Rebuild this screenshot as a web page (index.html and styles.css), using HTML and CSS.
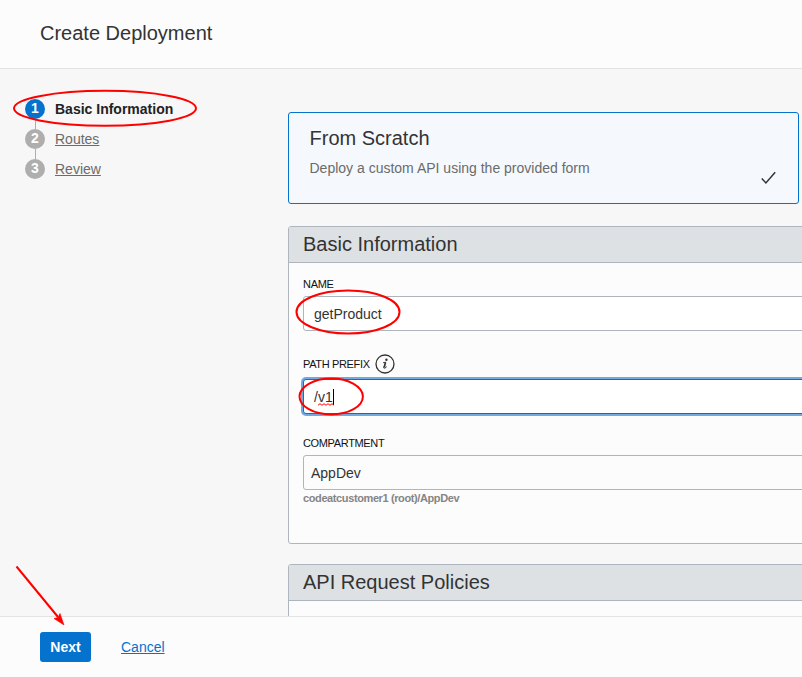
FILE: index.html
```html
<!DOCTYPE html>
<html lang="en">
<head>
<meta charset="utf-8">
<title>Create Deployment</title>
<link rel="stylesheet" href="styles.css">
</head>
<body>
<div class="dialog">
  <header class="header"><h1 class="title">Create Deployment</h1></header>
  <main class="body">
    <nav class="sidebar">
      <ol class="steps">
        <li class="step current"><span class="num">1</span><span class="label">Basic Information</span></li>
        <li class="step"><span class="num">2</span><a class="label">Routes</a></li>
        <li class="step"><span class="num">3</span><a class="label">Review</a></li>
      </ol>
    </nav>
    <div class="content">
      <section class="card">
        <div>
          <h2 class="card-title">From Scratch</h2>
          <p class="card-text">Deploy a custom API using the provided form</p>
        </div>
        <svg class="check" width="16" height="14" viewBox="0 0 16 14"><path d="M1.8 7.4 5.9 11.9 15.2 1.2" fill="none" stroke="#333" stroke-width="1.5"/></svg>
      </section>
      <section class="panel basic">
        <h2 class="panel-title">Basic Information</h2>
        <div class="form">
          <div class="field-label name-label">NAME</div>
          <div class="input">getProduct</div>
          <div class="field-label prefix-label"><span class="prefix-text">PATH PREFIX</span>
            <svg class="info" width="20" height="20" viewBox="0 0 20 20"><circle cx="10" cy="10" r="9" fill="none" stroke="#333" stroke-width="1.3"/><circle cx="11.4" cy="5.8" r="1.2" fill="#333"/><path d="M8 8.7 10.8 8.2" fill="none" stroke="#333" stroke-width=".9"/><path d="M10.5 8.2 9.3 13.1" fill="none" stroke="#333" stroke-width="1.7"/><path d="M8.7 12.6Q8.3 14.7 10 14.1L11.7 12.7" fill="none" stroke="#333"/></svg>
          </div>
          <div class="input focused">/<span class="misspelled">v1<svg class="squiggle" width="16" height="3" viewBox="0 0 16 3"><path d="M0 2.3 2 .7 4 2.3 6 .7 8 2.3 10 .7 12 2.3 14 .7 16 2.3" fill="none" stroke="#f00"/></svg></span><i class="caret"></i></div>
          <div class="field-label compartment-label">COMPARTMENT</div>
          <div class="input select">AppDev</div>
          <div class="hint">codeatcustomer1 (root)/AppDev</div>
        </div>
      </section>
      <section class="panel">
        <h2 class="panel-title">API Request Policies</h2>
        <div class="form"></div>
      </section>
    </div>
  </main>
  <footer class="footer"><button class="next">Next</button><a class="cancel">Cancel</a></footer>
  <svg class="annotations" width="802" height="677" viewBox="0 0 802 677">
    <g fill="none" stroke="#f00" stroke-width="2">
      <ellipse cx="105" cy="108.3" rx="91" ry="17.5"/>
      <ellipse cx="348" cy="312" rx="51.5" ry="21.5"/>
      <ellipse cx="331.2" cy="396.5" rx="31.7" ry="18"/>
      <path d="M16.5 566.5 58 617"/>
    </g>
    <path d="M64 625 54 618.5 58 617.5 60 613.5Z" fill="#f00" stroke="#f00" stroke-width=".6"/>
  </svg>
</div>
</body>
</html>
```

FILE: styles.css
```css
* { box-sizing: border-box; }
body { margin: 0; font: 14px/20px "Liberation Sans", Arial, sans-serif; color: #333; overflow: hidden; }
h1, h2, p, ol { margin: 0; padding: 0; font-weight: 400; }
.dialog { position: relative; width: 802px; height: 677px; display: flex; flex-direction: column; overflow: hidden; background: #f7f7f7; }
.header { height: 69px; flex: none; padding: 21px 40px; background: #fcfcfc; border-bottom: 1px solid #e3e3e3; }
.title { font-size: 20px; line-height: 24px; }
.body { flex: 1; min-height: 0; display: flex; overflow: hidden; }
.sidebar { width: 288px; flex: none; padding: 30px 0 0 25px; }
.steps { list-style: none; display: flex; flex-direction: column; gap: 10px; }
.step { position: relative; display: flex; gap: 10px; height: 20px; color: #6b6b6b; }
.step + .step::before { content: ""; position: absolute; left: 10px; top: -10px; width: 1px; height: 10px; background: #aeaeae; }
.num { width: 20px; height: 20px; border-radius: 50%; background: #aeaeae; color: #fff; font-weight: 700; line-height: 19px; text-align: center; }
.step a { text-decoration: underline; }
.current { color: #222; font-weight: 700; }
.current .num { background: #0572ce; }
.content { width: 530px; flex: none; padding-top: 43px; }
.card { width: 511px; height: 92px; display: flex; justify-content: space-between; padding: 13px 22px 0 20.5px; border: 1px solid #0572ce; border-radius: 3px; background: #f5f9fe; }
.card-title { font-size: 20px; line-height: 24px; }
.card-text { margin-top: 8px; color: #6b6b6b; }
.check { margin-top: 45px; }
.panel { margin-top: 22px; border: 1px solid #aeb5bf; border-radius: 3px; background: #fcfcfc; }
.panel + .panel { margin-top: 20px; }
.basic { height: 318px; }
.panel-title { height: 36px; padding: 5px 14px; font-size: 20px; line-height: 24px; background: #dde1e4; border-bottom: 1px solid #aeb5bf; border-radius: 2px 2px 0 0; }
.form { min-height: 40px; padding: 0 0 0 14px; }
.field-label { display: flex; align-items: center; font-size: 11px; line-height: 14px; color: #111; }
.name-label { padding-top: 14px; height: 33px; align-items: flex-start; letter-spacing: -.3px; }
.prefix-label { height: 48px; padding-top: 18px; gap: 5px; }
.prefix-text { letter-spacing: -.35px; }
.compartment-label { height: 41px; padding-top: 17px; letter-spacing: -.35px; }
.input { width: 520px; height: 35px; padding: 0 10px; border: 1px solid #aeb5bf; border-radius: 3px; background: #fff; line-height: 35px; }
.focused { border-color: #0572ce; box-shadow: 0 0 0 2px #73a9df; display: flex; }
.misspelled { position: relative; }
.squiggle { position: absolute; left: 0; top: 23px; }
.caret { width: 1px; height: 16px; margin-top: 9px; background: #000; }
.select { padding-left: 7px; background: #fcfcfc; }
.hint { font-size: 11px; line-height: 16px; font-weight: 700; color: #858585; letter-spacing: -.39px; }
.footer { height: 61px; flex: none; display: flex; align-items: flex-start; gap: 30px; padding: 15px 40px; border-top: 1px solid #e3e3e3; background: #fcfcfc; }
.next { width: 51px; height: 30px; padding: 0; border: 0; border-radius: 3px; background: #0572ce; color: #fff; font: 700 14px/30px "Liberation Sans", Arial, sans-serif; }
.cancel { line-height: 30px; color: #0572ce; text-decoration: underline; }
.annotations { position: absolute; left: 0; top: 0; pointer-events: none; }
```
